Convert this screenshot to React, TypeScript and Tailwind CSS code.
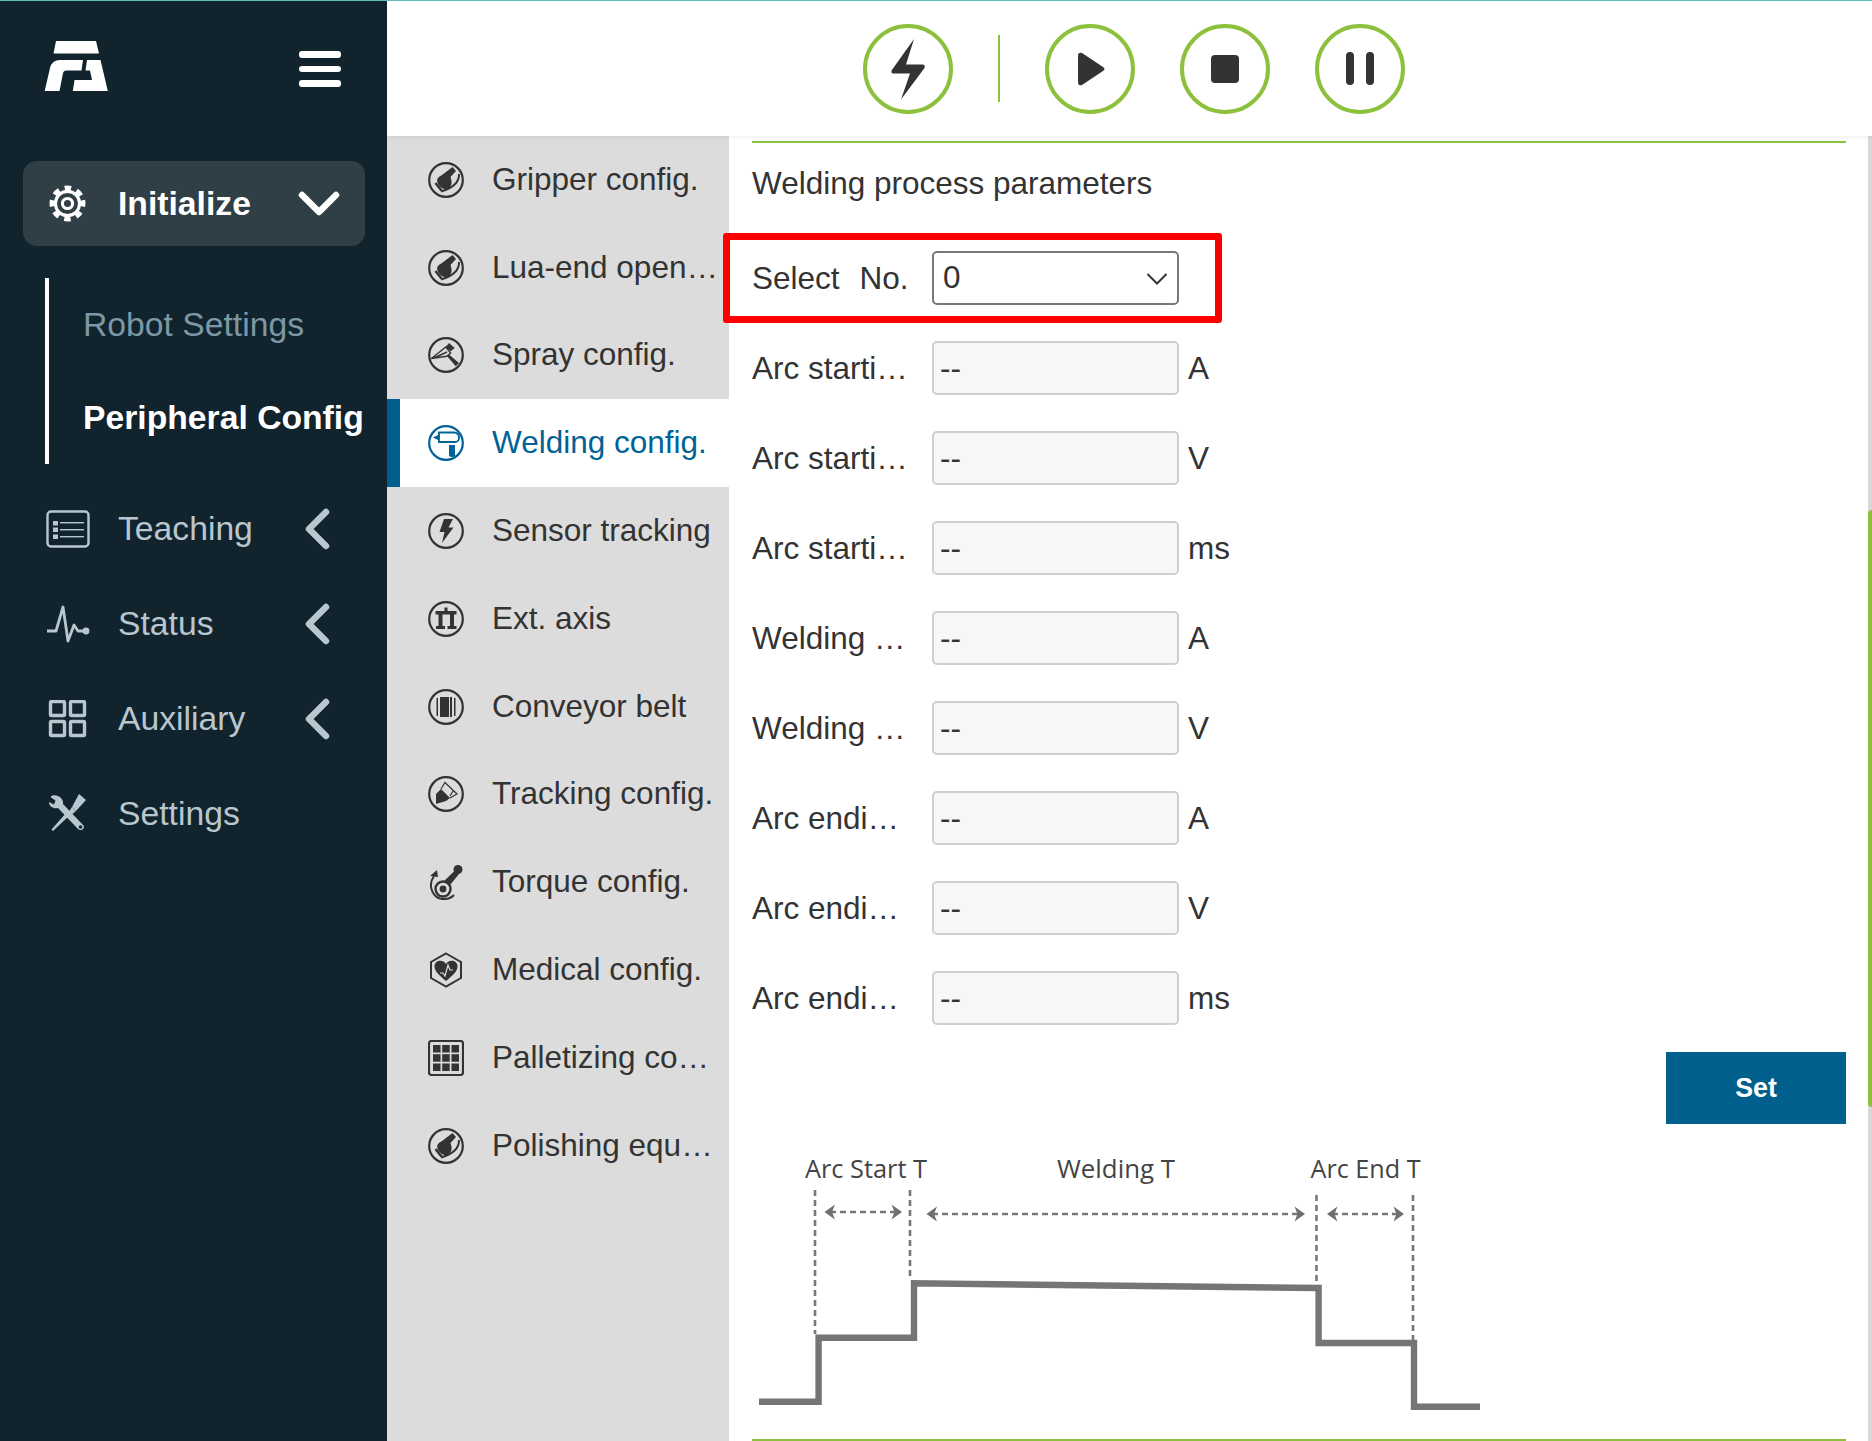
import React from "react";

const Ring = () => <circle cx="18" cy="18" r="16.8" fill="none" stroke="currentColor" strokeWidth="2.2" />;

const Gripper = () => (
  <svg viewBox="0 0 36 36" className="w-[36px] h-[36px]">
    <Ring />
    <path d="M24.5 5 L28 9 L22.5 15 Q25.5 23 20.5 26.5 Q14.5 29 10 22 Q7 16 14 13 Z" fill="currentColor" />
    <path d="M31 12 Q31.5 24 13 29.5" fill="none" stroke="currentColor" strokeWidth="2" />
    <path d="M7.5 21 L13.5 28.5" fill="none" stroke="currentColor" strokeWidth="2.6" />
  </svg>
);

const Spray = () => (
  <svg viewBox="0 0 36 36" className="w-[36px] h-[36px]">
    <Ring />
    <path d="M3.5 21.5 L17.7 10 L22.7 16 L18.7 19.3 Z M7 20.5 L19 15" fill="none" stroke="currentColor" strokeWidth="1.4" strokeLinejoin="round" />
    <path d="M21 6 L26.7 11 L22.7 14.3 L17.7 10 Z M19 19 L21 17.5 L31 26 L27.7 29.3 Z" fill="currentColor" />
  </svg>
);

const Weld = () => (
  <svg viewBox="0 0 36 36" className="w-[36px] h-[36px]">
    <Ring />
    <path d="M5 12.5 L11 9.5 V15.5 Z" fill="currentColor" />
    <path d="M11 7.5 H26 A5 5 0 0 1 31 12.5 V13 A4 4 0 0 1 27 17 H11 Z" fill="none" stroke="currentColor" strokeWidth="1.8" />
    <path d="M21 20 H27 V31 Q24 33 21 31 Z" fill="currentColor" />
  </svg>
);

const Sensor = () => (
  <svg viewBox="0 0 36 36" className="w-[36px] h-[36px]">
    <Ring />
    <path d="M16 6 H25 L20.5 14.5 H25.5 L14 30 L16.5 19 H11.5 Z" fill="currentColor" />
  </svg>
);

const Axis = () => (
  <svg viewBox="0 0 36 36" className="w-[36px] h-[36px]">
    <Ring />
    <path d="M7.5 10 H28.5 V13.5 H7.5 Z M16.5 6.5 H19.5 V10 H16.5 Z M10.5 13.5 H14.5 V25 H17 V28 H8 V25 H10.5 Z M22 13.5 H26 V25 H28.5 V28 H19.5 V25 H22 Z" fill="currentColor" />
  </svg>
);

const Belt = () => (
  <svg viewBox="0 0 36 36" className="w-[36px] h-[36px]">
    <Ring />
    <path d="M8.5 9 H10 V27 H8.5 Z M26 9 H27.5 V27 H26 Z M12 8 H24 V28 H12 Z" fill="currentColor" />
    <path d="M21.5 8 V28" stroke="#dcdcdc" strokeWidth="1" />
  </svg>
);

const Track = () => (
  <svg viewBox="0 0 36 36" className="w-[36px] h-[36px]">
    <Ring />
    <path d="M8 28 V18 L13 13 L22 22 L18 25 Z" fill="currentColor" />
    <path d="M13 13 L17 6.5 L29 18 L22 22 M25 15 L22 20" fill="none" stroke="currentColor" strokeWidth="1.2" />
  </svg>
);

const Torque = () => (
  <svg viewBox="0 0 36 36" className="w-[36px] h-[36px]">
    <path d="M6 12 C-1 22 5 36 17 35 C21 35 24 33 26 31" fill="none" stroke="currentColor" strokeWidth="2" />
    <path d="M2 12 L9 6 L10 13 Z" fill="currentColor" />
    <circle cx="15" cy="25" r="7.5" fill="none" stroke="currentColor" strokeWidth="2.4" />
    <circle cx="15" cy="25" r="3.4" fill="currentColor" />
    <path d="M16 17 L27 6.5 L31 10 L22 21 Z" fill="currentColor" />
    <circle cx="30" cy="5.5" r="4.5" fill="currentColor" />
  </svg>
);

const Medical = () => (
  <svg viewBox="0 0 36 36" className="w-[36px] h-[36px]">
    <path d="M18 1.5 L33 10 V26 L18 34.5 L3 26 V10 Z" fill="none" stroke="currentColor" strokeWidth="2" />
    <path d="M18 29 C12 24 6.5 19.5 6.5 14.5 C6.5 8 15 7 18 12 C21 7 29.5 8 29.5 14.5 C29.5 19.5 24 24 18 29 Z" fill="currentColor" />
    <path d="M12 21 H15 L17 24 L20 13 L22 18 H25" fill="none" stroke="#dcdcdc" strokeWidth="1.2" />
  </svg>
);

const Pallet = () => (
  <svg viewBox="0 0 36 36" className="w-[36px] h-[36px]">
    <rect x="1" y="1" width="34" height="34" rx="2.5" fill="none" stroke="currentColor" strokeWidth="2.2" />
    <g fill="currentColor">
      <rect x="5" y="5" width="7.5" height="7.5" /><rect x="14.2" y="5" width="7.5" height="7.5" /><rect x="23.5" y="5" width="7.5" height="7.5" />
      <rect x="5" y="14.2" width="7.5" height="7.5" /><rect x="14.2" y="14.2" width="7.5" height="7.5" /><rect x="23.5" y="14.2" width="7.5" height="7.5" />
      <rect x="5" y="23.5" width="7.5" height="7.5" /><rect x="14.2" y="23.5" width="7.5" height="7.5" /><rect x="23.5" y="23.5" width="7.5" height="7.5" />
    </g>
  </svg>
);

const Gear = () => (
  <svg viewBox="0 0 38 38" className="w-[37px] h-[37px]">
    <circle cx="19" cy="19" r="14" fill="#fff" />
    <circle cx="19" cy="19" r="16" fill="none" stroke="#fff" strokeWidth="5" strokeDasharray="6.5 6.07" transform="rotate(-12 19 19)" />
    <circle cx="19" cy="19" r="10.8" fill="#303f46" />
    <circle cx="19" cy="19" r="5.2" fill="none" stroke="#fff" strokeWidth="3.2" />
  </svg>
);

const TeachIcon = () => (
  <svg viewBox="0 0 44 38" className="w-[44px] h-[38px]">
    <rect x="1.5" y="1.5" width="41" height="35" rx="3.5" fill="none" stroke="currentColor" strokeWidth="2.4" />
    <g fill="currentColor">
      <rect x="7" y="11" width="5" height="4.5" /><rect x="7" y="17.5" width="5" height="4.5" /><rect x="7" y="24.5" width="5" height="4.5" />
      <rect x="14" y="12" width="24" height="1.4" /><rect x="14" y="19" width="24" height="1.4" /><rect x="14" y="26" width="24" height="1.4" />
    </g>
  </svg>
);

const StatusIcon = () => (
  <svg viewBox="0 0 44 38" className="w-[44px] h-[38px]">
    <path d="M1 26 H10 L17 2 L22 36 L28 20 L32 26 H41" fill="none" stroke="currentColor" strokeWidth="2.8" strokeLinejoin="round" />
    <circle cx="40" cy="26" r="3.4" fill="currentColor" />
  </svg>
);

const AuxIcon = () => (
  <svg viewBox="0 0 44 38" className="w-[44px] h-[38px]">
    <g fill="none" stroke="currentColor" strokeWidth="3.4">
      <rect x="4.5" y="1.5" width="14" height="14" rx="1" /><rect x="24.5" y="1.5" width="14" height="14" rx="1" />
      <rect x="4.5" y="21.5" width="14" height="14" rx="1" /><rect x="24.5" y="21.5" width="14" height="14" rx="1" />
    </g>
  </svg>
);

const ToolsIcon = () => (
  <svg viewBox="0 0 44 38" className="w-[44px] h-[38px]">
    <g fill="currentColor">
      <path d="M33 0 L40 6 L30 17 L26 13 Z" />
      <path d="M26 13 L30 17 L24 22 L22 19 Z" />
      <path d="M21 18 L24 21 L7 37 L5.5 35.5 Z" />
      <path d="M10 1.5 C7 .5 4 2 5 3.5 L9.5 6.5 L8 10.5 L3 8 C3 13 8 15 12 14 L32 35 C35 38 40 34 37 31 L17 10 C18 6 14 2 10 1.5 Z" />
    </g>
    <circle cx="34.5" cy="33" r="1.8" fill="#11232c" />
  </svg>
);

const ChevronLeft = () => (
  <svg viewBox="0 0 26 42" className="w-[26px] h-[42px]">
    <path d="M22 4 L5 21 L22 38" fill="none" stroke="#b8c7cf" strokeWidth="6.5" strokeLinecap="round" strokeLinejoin="round" />
  </svg>
);

const mainItems = [
  { label: "Teaching", icon: <TeachIcon />, chevron: true },
  { label: "Status", icon: <StatusIcon />, chevron: true },
  { label: "Auxiliary", icon: <AuxIcon />, chevron: true },
  { label: "Settings", icon: <ToolsIcon />, chevron: false },
];

const subItems = [
  { label: "Gripper config.", icon: <Gripper /> },
  { label: "Lua-end open protocol", icon: <Gripper /> },
  { label: "Spray config.", icon: <Spray /> },
  { label: "Welding config.", icon: <Weld />, active: true },
  { label: "Sensor tracking", icon: <Sensor /> },
  { label: "Ext. axis", icon: <Axis /> },
  { label: "Conveyor belt", icon: <Belt /> },
  { label: "Tracking config.", icon: <Track /> },
  { label: "Torque config.", icon: <Torque /> },
  { label: "Medical config.", icon: <Medical /> },
  { label: "Palletizing config.", icon: <Pallet /> },
  { label: "Polishing equipment", icon: <Gripper /> },
];

const params = [
  ["Arc starting current", "A"],
  ["Arc starting voltage", "V"],
  ["Arc starting time", "ms"],
  ["Welding current", "A"],
  ["Welding voltage", "V"],
  ["Arc ending current", "A"],
  ["Arc ending voltage", "V"],
  ["Arc ending time", "ms"],
];

const Logo = () => (
  <svg viewBox="44 41 64 50" className="w-[64px] h-[50px]">
    <g fill="#fff">
      <path d="M56 41 H96 L99 53.5 H53.5 Z" />
      <path d="M44.7 91 L50 68 Q52 60 60 60 H83 L81.5 70.5 H66 Q63.5 70.5 63 73 L59.5 91 Z" />
      <path d="M87 60 H100.5 L107.8 91 H72.8 L74.5 80 H92 L90 70.5 H85.5 Z" />
    </g>
  </svg>
);

const RoundBtn = ({ children }: { children: React.ReactNode }) => (
  <div className="w-[90px] h-[90px] rounded-full border-[4px] border-[#8dc03c] flex items-center justify-center shrink-0">
    {children}
  </div>
);

const Chart = () => (
  <svg viewBox="752 1124 1094 315" className="w-[1094px] h-[315px] block">
    <g fontFamily="'Open Sans', sans-serif" fontSize="25" fill="#444">
      <text x="805" y="1178" textLength="122" lengthAdjust="spacingAndGlyphs">Arc Start T</text>
      <text x="1057" y="1178" textLength="118" lengthAdjust="spacingAndGlyphs">Welding T</text>
      <text x="1310.5" y="1178" textLength="110" lengthAdjust="spacingAndGlyphs">Arc End T</text>
    </g>
    <g stroke="#777" strokeWidth="2.6" strokeDasharray="6 4" fill="none">
      <path d="M815 1190 V1334" />
      <path d="M910 1190 V1277" />
      <path d="M1316.5 1195 V1282" />
      <path d="M1413 1195 V1340" />
      <path d="M830 1212 H897" />
      <path d="M932 1214 H1300" />
      <path d="M1332 1214 H1399" />
    </g>
    <g fill="#6f6f6f">
      <path d="M824.5 1212 L835 1204.5 L832 1212 L835 1219.5 Z" />
      <path d="M902 1212 L891.5 1204.5 L894.5 1212 L891.5 1219.5 Z" />
      <path d="M926.5 1214 L937 1206.5 L934 1214 L937 1221.5 Z" />
      <path d="M1305 1214 L1294.5 1206.5 L1297.5 1214 L1294.5 1221.5 Z" />
      <path d="M1327 1214 L1337.5 1206.5 L1334.5 1214 L1337.5 1221.5 Z" />
      <path d="M1404 1214 L1393.5 1206.5 L1396.5 1214 L1393.5 1221.5 Z" />
    </g>
    <path d="M759 1401.7 H818.6 V1337.7 H914 V1283.3 L1318.6 1288 V1343 H1414 V1406.7 H1480" fill="none" stroke="#757575" strokeWidth="6.4" />
  </svg>
);

export default function App() {
  return (
    <div className="w-full h-[1441px] overflow-hidden flex flex-col bg-white text-[#333] font-['Liberation_Sans',Arial,sans-serif]">
      <div className="h-px bg-[#5fbcb8] shrink-0" />
      <div className="flex flex-1 min-h-0">
        <aside className="w-[387px] shrink-0 bg-[#11232c] flex flex-col">
          <div className="h-[135px] shrink-0 flex items-start justify-between pl-[44px] pr-[46px]">
            <div className="mt-[40px]"><Logo /></div>
            <div className="mt-[50px] flex flex-col gap-[8px]">
              <span className="block w-[42px] h-[6.5px] rounded-[3px] bg-white" />
              <span className="block w-[42px] h-[6.5px] rounded-[3px] bg-white" />
              <span className="block w-[42px] h-[6.5px] rounded-[3px] bg-white" />
            </div>
          </div>
          <div className="ml-[23px] mr-[22px] mt-[25px] h-[85px] rounded-[14px] bg-[#303f46] flex items-center pl-[26px] pr-[25px] text-white">
            <Gear />
            <span className="ml-[32px] flex-1 font-bold text-[33.7px] leading-none">Initialize</span>
            <svg viewBox="0 0 42 26" className="w-[42px] h-[26px]">
              <path d="M4 4 L21 21 L38 4" fill="none" stroke="#fff" strokeWidth="6.5" strokeLinecap="round" strokeLinejoin="round" />
            </svg>
          </div>
          <div className="ml-[45px] mt-[32px] h-[186px] border-l-4 border-white pl-[34px] flex flex-col">
            <div className="h-[93px] flex items-center text-[33.7px] text-[#7c97a5]">Robot Settings</div>
            <div className="h-[93px] flex items-center text-[33.7px] font-bold text-white whitespace-nowrap">Peripheral Config</div>
          </div>
          <div className="mt-[18px] flex flex-col">
            {mainItems.map((m) => (
              <div key={m.label} className="h-[94.7px] flex items-center pl-[46px] pr-[57px] text-[#b8c7cf]">
                <span className="w-[44px] shrink-0 flex">{m.icon}</span>
                <span className="ml-[28px] flex-1 text-[33.7px] leading-none">{m.label}</span>
                {m.chevron && <ChevronLeft />}
              </div>
            ))}
          </div>
        </aside>
        <main className="flex-1 min-w-0 flex flex-col">
          <header className="h-[135px] shrink-0 pl-[476px] flex items-center gap-[45px] shadow-[0_2px_4px_rgba(0,0,0,0.06)] relative z-10 bg-white">
            <RoundBtn>
              <svg viewBox="0 0 36 62" className="w-[36px] h-[62px]">
                <path d="M24 1 L1.5 32.5 Q1 35 3 35.5 H20 L11 61.5 L34.5 30 Q35.5 27 33 26.5 H16 Z" fill="#333" />
              </svg>
            </RoundBtn>
            <span className="block w-[2px] h-[67px] bg-[#8dc03c]" />
            <RoundBtn>
              <svg viewBox="0 0 30 34" className="w-[30px] h-[34px] ml-[2px]">
                <path d="M2 4 Q2 0 6 1 L27 15 Q30 17 27 19 L6 33 Q2 34 2 30 Z" fill="#333" />
              </svg>
            </RoundBtn>
            <RoundBtn>
              <span className="block w-[28px] h-[28px] rounded-[4px] bg-[#333]" />
            </RoundBtn>
            <RoundBtn>
              <span className="flex gap-[12px]">
                <span className="block w-[8px] h-[33px] rounded-[4px] bg-[#333]" />
                <span className="block w-[8px] h-[33px] rounded-[4px] bg-[#333]" />
              </span>
            </RoundBtn>
          </header>
          <div className="flex flex-1 min-h-0">
            <nav className="w-[342px] shrink-0 bg-[#dcdcdc] flex flex-col">
              {subItems.map((s) => (
                <div
                  key={s.label}
                  className={
                    s.active
                      ? "h-[87.8px] shrink-0 flex items-center bg-white border-l-[13px] border-[#005f8c] pl-[28px] text-[#006295]"
                      : "h-[87.8px] shrink-0 flex items-center pl-[41px] text-[#333]"
                  }
                >
                  <span className="w-[36px] h-[36px] shrink-0 flex">{s.icon}</span>
                  <span className="ml-[28px] mb-[2px] w-[227px] truncate text-[31.5px] leading-[40px]">{s.label}</span>
                </div>
              ))}
            </nav>
            <section className="flex-1 min-w-0 relative pl-[23px] pr-[26px] pt-[5px] flex flex-col">
              <div className="border-t-[2px] border-b-[2px] border-[#8dc03c] flex-1 flex flex-col">
                <div className="h-[82px] flex items-center text-[31.5px] mb-[26px]">Welding process parameters</div>
                <div className="flex flex-col gap-[36px]">
                  <div className="relative h-[54px] flex items-center">
                    <span className="flex gap-[20px] w-[180px] shrink-0 text-[31.5px] pt-[2px]"><span>Select</span><span>No.</span></span>
                    <div className="w-[247px] h-[54px] rounded-[5px] border-2 border-[#777] bg-white flex items-center justify-between pl-[9px] pr-[9px] text-[31.5px]">
                      <span>0</span>
                      <svg viewBox="0 0 22 14" className="w-[22px] h-[14px] mt-[2px]">
                        <path d="M1.5 2 L11 11.5 L20.5 2" fill="none" stroke="#333" strokeWidth="2" />
                      </svg>
                    </div>
                    <span className="absolute left-[-29px] top-[-18px] w-[499px] h-[90px] border-[7px] border-[#ff0000] rounded-[3px] pointer-events-none" />
                  </div>
                  {params.map(([label, unit]) => (
                    <div key={label} className="h-[54px] flex items-center">
                      <span className="block w-[158px] mr-[22px] shrink-0 truncate text-[31.5px] pt-[2px]">{label}</span>
                      <input
                        readOnly
                        value="--"
                        className="w-[247px] h-[54px] rounded-[5px] border-2 border-[#cfcfcf] bg-[#f7f7f7] px-[6px] text-[31.5px] font-medium text-[#333] outline-none"
                      />
                      <span className="ml-[9px] text-[31.5px] pt-[2px]">{unit}</span>
                    </div>
                  ))}
                </div>
                <button className="self-end mt-[27px] w-[180px] h-[72px] shrink-0 bg-[#005f8c] text-white font-bold text-[26.8px]">Set</button>
                <Chart />
              </div>
              <div className="absolute top-0 bottom-0 right-0 w-[4px] bg-[#d8d8d8]">
                <div className="absolute left-0 right-0 top-[374px] h-[597px] bg-[#8dc03c] rounded-l-[4px]" />
              </div>
            </section>
          </div>
        </main>
      </div>
    </div>
  );
}
